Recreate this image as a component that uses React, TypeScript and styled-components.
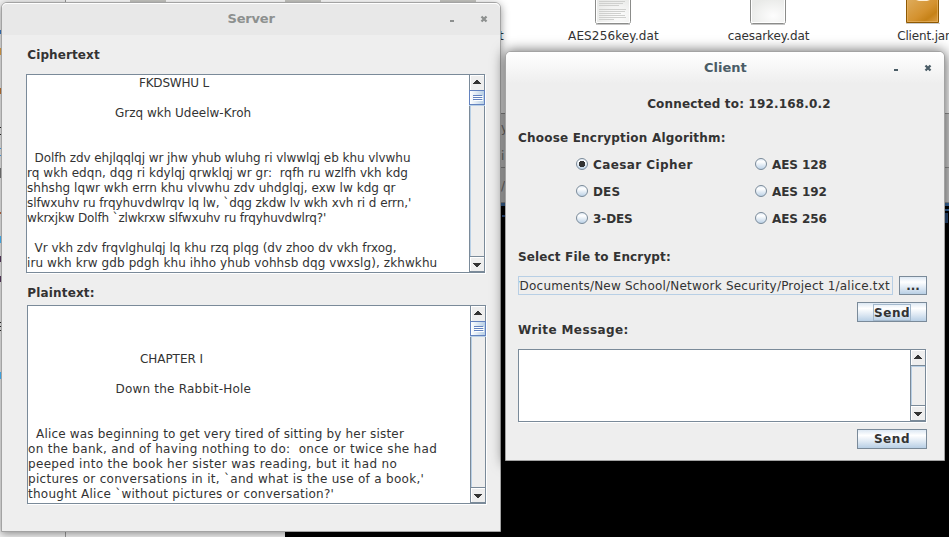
import React from "react";
import styled, { createGlobalStyle, css } from "styled-components";

const Global = createGlobalStyle`
  body { margin: 0; overflow: hidden; background: #fff; }
  * { box-sizing: border-box; }
`;

const steel = "#7a8a99";

const Desktop = styled.main`
  position: relative;
  width: 949px;
  height: 537px;
  overflow: hidden;
  background: #fff;
  color: #333;
  font: 12px/15px "DejaVu Sans", Verdana, sans-serif;
`;

/* ---------- backdrop ---------- */

const Backdrop = styled.div`
  display: grid;
  grid-template-columns: 65px 1px 219px 1fr;
  grid-template-rows: 203px 1fr;
  height: 537px;
`;
const Sidebar = styled.div`
  grid-row: 1 / 3;
  background: #f2f2f2;
`;
const SidebarEdge = styled.div`
  grid-row: 1 / 3;
  background: #999;
`;
const FilesLower = styled.div`
  grid-column: 3;
  grid-row: 2;
  background: #f4f4f4;
`;
const FilesUpper = styled.div`
  grid-column: 3 / 5;
  display: flex;
  flex-direction: column;
`;
const FilesBand = styled.div<{ $h: number; $tone: string }>`
  height: ${(p) => p.$h}px;
  background: ${(p) => p.$tone};
  border-bottom: 1px solid #999;
`;
const Terminal = styled.div`
  grid-column: 4;
  background: #000;
  border-top: 3px solid #3f70a8;
`;
const Sliver = styled.i<{ $x: number; $y: number; $w?: number; $h?: number; $c: string }>`
  position: absolute;
  left: ${(p) => p.$x}px;
  top: ${(p) => p.$y}px;
  width: ${(p) => p.$w ?? 1}px;
  height: ${(p) => p.$h ?? 3}px;
  background: ${(p) => p.$c};
`;
const Fragment = styled.span<{ $x: number; $y: number; $c: string }>`
  position: absolute;
  left: ${(p) => p.$x}px;
  top: ${(p) => p.$y}px;
  white-space: nowrap;
  color: ${(p) => p.$c};
`;
const DesktopFile = styled.figure<{ $x: number }>`
  position: absolute;
  left: ${(p) => p.$x}px;
  top: 0;
  width: 110px;
  margin: 0;
  display: flex;
  flex-direction: column;
  align-items: center;
  svg { display: block; }
`;
const FileName = styled.figcaption<{ $ls: number }>`
  margin-top: 2px;
  padding-left: 1px;
  letter-spacing: ${(p) => p.$ls}px;
  white-space: nowrap;
`;

const PageIcon = ({ lines }: { lines?: boolean }) => (
  <svg width="40" height="27" viewBox="0 0 40 27">
    <defs>
      <radialGradient id="paper" cx=".65" cy=".7" r=".7">
        <stop offset="0" stopColor="#fdfdfd" />
        <stop offset="1" stopColor="#e9eae8" />
      </radialGradient>
    </defs>
    <path d="M3 24.500h34" stroke="#000" strokeOpacity=".22" strokeWidth="1" />
    <path d="M2.500-2V21.500q0 2 2 2h31q2 0 2-2V-2" fill="url(#paper)" stroke="#8b8c8a" />
    <path d="M3.500 0V22.500h33V0" fill="none" stroke="#fff" />
    {lines && <path d="M6 1.500h26M6 3.500h24M6 5.500h20M6 9.500h27M6 11.500h26M6 13.500h22M6 15.500h26M6 17.500h27M6 19.500h15" stroke="#cfd0ce" />}
  </svg>
);
const JarIcon = () => (
  <svg width="40" height="27" viewBox="0 0 40 27">
    <defs>
      <linearGradient id="jar" x1="0" y1="0" x2="1" y2="1">
        <stop offset="0" stopColor="#dfae60" />
        <stop offset=".55" stopColor="#d4922f" />
        <stop offset=".75" stopColor="#c68218" />
        <stop offset="1" stopColor="#dda048" />
      </linearGradient>
    </defs>
    <path d="M3 23.500h34" stroke="#000" strokeOpacity=".2" strokeWidth="1" />
    <path d="M3.500-2V22.500h32V-2" fill="url(#jar)" stroke="#8f5902" />
    <path d="M4.500 0V21.500h30V0" fill="none" stroke="#e9b96e" strokeOpacity=".6" />
    <path d="M13 0h14l-3 1h-8z" fill="#fff0d8" />
  </svg>
);

/* ---------- windows ---------- */

const Frame = styled.section<{ $x: number; $y: number; $w: number; $h: number; $active?: boolean }>`
  position: absolute;
  left: ${(p) => p.$x}px;
  top: ${(p) => p.$y}px;
  width: ${(p) => p.$w}px;
  height: ${(p) => p.$h}px;
  background: #eee;
  border: 1px solid #a3a3a3;
  border-radius: 6px 6px 0 0;
  box-shadow: ${(p) => (p.$active ? "0 1px 13px 1px rgba(0,0,0,.62)" : "0 2px 8px rgba(0,0,0,.42)")};
`;
const TitleBar = styled.header<{ $active?: boolean }>`
  display: grid;
  grid-template-columns: 1fr 8px 24px 8px 12px;
  align-items: center;
  height: 32px;
  border-radius: 5px 5px 0 0;
  box-shadow: inset 0 1px 0 #fff;
  background: ${(p) => (p.$active ? "linear-gradient(#fff, #eee)" : "#e8e8e8")};
  color: ${(p) => (p.$active ? "#4a5c66" : "#8d908f")};
  svg { display: block; }
`;
const Title = styled.h1<{ $ls: number; $pad: number }>`
  margin: 0;
  padding-left: ${(p) => p.$pad}px;
  font-size: 13px;
  line-height: 16px;
  letter-spacing: ${(p) => p.$ls}px;
`;
const Minimize = () => (
  <svg width="8" height="8" viewBox="0 0 8 8">
    <path d="M2 6h4" stroke="currentColor" strokeWidth="2" />
  </svg>
);
const Close = () => (
  <svg width="8" height="8" viewBox="0 0 8 8">
    <path d="M1.500 1.500l5 5M6.500 1.500l-5 5" stroke="currentColor" strokeWidth="2.300" />
  </svg>
);

const Label = styled.h2<{ $ls?: number }>`
  margin: 0;
  height: 15px;
  font-size: 12px;
  line-height: 17px;
  font-weight: bold;
  letter-spacing: ${(p) => p.$ls ?? 0}px;
  white-space: nowrap;
`;

/* ---------- scroll pane ---------- */

const Pane = styled.div<{ $w: number; $h: number; $ml?: number }>`
  display: grid;
  grid-template-columns: 1fr 15px;
  width: ${(p) => p.$w}px;
  height: ${(p) => p.$h}px;
  margin-left: ${(p) => p.$ml ?? 0}px;
  border: 1px solid ${steel};
  box-shadow: 1px 1px 0 #fff;
  background: #fff;
`;
const TextArea = styled.div`
  min-width: 0;
  overflow: hidden;
`;
const Line = styled.div<{ $ls: number; $in: number }>`
  height: 15px;
  line-height: 17px;
  padding-left: ${(p) => p.$in}px;
  letter-spacing: ${(p) => p.$ls}px;
  white-space: pre;
`;
const Bar = styled.div`
  display: grid;
  grid-template-rows: 15px 1fr 16px;
  min-height: 0;
  border-left: 1px solid ${steel};
  background: #eee;
  svg { display: block; }
`;
const Arrow = styled.div<{ $down?: boolean }>`
  display: flex;
  justify-content: center;
  padding-top: ${(p) => (p.$down ? 6 : 5)}px;
  box-shadow: inset 1px 1px 0 #fff;
  ${(p) => p.$down && css`
    border-top: 1px solid ${steel};
    border-bottom: 1px solid ${steel};
  `}
`;
const Track = styled.div<{ $plain?: boolean }>`
  box-shadow: inset 1px 1px 0 #b8cfe5;
  ${(p) => p.$plain && css`border-top: 1px solid ${steel};`}
`;
const Thumb = styled.div`
  display: flex;
  flex-direction: column;
  gap: 1px;
  height: 15px;
  margin-left: -1px;
  margin-right: -1px;
  padding: 4px 0 0 3px;
  border: 1px solid #6382bf;
  background: linear-gradient(90deg, #fff, #b8cfe5);
  box-shadow: 0 1px 0 #b8cfe5;
`;
const Grip = styled.i`
  width: 9px;
  height: 1px;
  background: #6382bf;
  box-shadow: 1px 1px 0 #fff;
`;

const Triangle = ({ down }: { down?: boolean }) => (
  <svg width="8" height="4" viewBox="0 0 8 4" shapeRendering="crispEdges">
    <path fill="#333" d={down ? "M0 0h8v1h-1v1h-1v1h-1v1h-2v-1h-1v-1h-1v-1h-1z" : "M0 4h8v-1h-1v-1h-1v-1h-1v-1h-2v1h-1v1h-1v1h-1z"} />
  </svg>
);

type TextLine = [text: string, indent?: number, spacing?: number];

function ScrollPane({ w, h, ml, lines = [], thumb }: { w: number; h: number; ml?: number; lines?: TextLine[]; thumb?: boolean }) {
  return (
    <Pane $w={w} $h={h} $ml={ml}>
      <TextArea>
        {lines.map(([text, indent = 0, spacing = 0], i) => (
          <Line key={i} $in={indent} $ls={spacing}>{text}</Line>
        ))}
      </TextArea>
      <Bar>
        <Arrow><Triangle /></Arrow>
        <Track $plain={!thumb}>
          {thumb && <Thumb><Grip /><Grip /><Grip /></Thumb>}
        </Track>
        <Arrow $down><Triangle down /></Arrow>
      </Bar>
    </Pane>
  );
}

/* ---------- server ---------- */

const ServerBody = styled.div`
  display: flex;
  flex-direction: column;
  padding: 12px 0 0 24px;
`;
const Gap = styled.div<{ $h: number }>`
  height: ${(p) => p.$h}px;
  flex: none;
`;

const cipher: TextLine[] = [
  ["FKDSWHU L", 112, -0.2],
  [""],
  ["Grzq wkh Udeelw-Kroh", 88, -0.01],
  [""],
  [""],
  ["Dolfh zdv ehjlqqlqj wr jhw yhub wluhg ri vlwwlqj eb khu vlvwhu", 7.5, -0.06],
  ["rq wkh edqn, dqg ri kdylqj qrwklqj wr gr:  rqfh ru wzlfh vkh kdg", 0, 0.05],
  ["shhshg lqwr wkh errn khu vlvwhu zdv uhdglqj, exw lw kdg qr", 0, 0.05],
  ["slfwxuhv ru frqyhuvdwlrqv lq lw, `dqg zkdw lv wkh xvh ri d errn,'", 0, -0.07],
  ["wkrxjkw Dolfh `zlwkrxw slfwxuhv ru frqyhuvdwlrq?'", 0, -0.17],
  [""],
  ["Vr vkh zdv frqvlghulqj lq khu rzq plqg (dv zhoo dv vkh frxog,", 7.5, -0.01],
  ["iru wkh krw gdb pdgh khu ihho yhub vohhsb dqg vwxslg), zkhwkhu", 0, 0.1],
];
const plain: TextLine[] = [
  [""],
  [""],
  [""],
  ["CHAPTER I", 112, -0.06],
  [""],
  ["Down the Rabbit-Hole", 87.5, 0.21],
  [""],
  [""],
  ["Alice was beginning to get very tired of sitting by her sister", 8, 0.185],
  ["on the bank, and of having nothing to do:  once or twice she had", 0, 0.3],
  ["peeped into the book her sister was reading, but it had no", 0, 0.33],
  ["pictures or conversations in it, `and what is the use of a book,'", 0, 0.3],
  ["thought Alice `without pictures or conversation?'", 0, 0.25],
];

/* ---------- client ---------- */

const ClientBody = styled.div`
  display: flex;
  flex-direction: column;
  padding: 12px 18px 0 12px;
`;
const Status = styled(Label)`
  align-self: center;
  margin-left: 34px;
`;
const RadioGrid = styled.div`
  display: grid;
  grid-template-columns: 179px 1fr;
  grid-auto-rows: 27px;
  padding-left: 58px;
`;
const Option = styled.label`
  display: flex;
  align-items: flex-start;
  gap: 5px;
`;
const RadioDot = ({ on }: { on?: boolean }) => (
  <svg width="12" height="14" viewBox="0 0 12 14">
    <defs>
      <linearGradient id="knob" x1="0" y1="0" x2="0" y2="1">
        <stop offset="0" stopColor="#dde8f3" />
        <stop offset=".3" stopColor="#fff" />
        <stop offset="1" stopColor="#b8cfe5" />
      </linearGradient>
    </defs>
    <circle cx="6" cy="7" r="5.500" fill="url(#knob)" stroke={steel} />
    {on && <path d="M4 4h4v1h1v4h-1v1h-4v-1h-1v-4h1z" fill="#333" />}
  </svg>
);
const Row = styled.div<{ $end?: boolean }>`
  display: flex;
  justify-content: ${(p) => (p.$end ? "flex-end" : "space-between")};
  width: 409px;
`;
const PathField = styled.div`
  display: flex;
  justify-content: flex-end;
  width: 375px;
  height: 19px;
  padding-right: 2px;
  border: 1px solid #b8cfe5;
  overflow: hidden;
  line-height: 19px;
  white-space: nowrap;
  letter-spacing: 0.21px;
`;
const Button = styled.button<{ $w: number; $h: number; $ls: number }>`
  display: flex;
  align-items: center;
  justify-content: center;
  width: ${(p) => p.$w}px;
  height: ${(p) => p.$h}px;
  padding: 1px 0 0;
  border: 1px solid ${steel};
  background: linear-gradient(#dde8f3, #fff 30%, #dde8f3 65%, #b8cfe5);
  color: #333;
  font: bold 12px/15px "DejaVu Sans", Verdana, sans-serif;
  letter-spacing: ${(p) => p.$ls}px;
`;
const Focus = styled.span`
  width: 38px;
  height: 17px;
  margin-top: -1px;
  border: 1px solid #a3b8cc;
  line-height: 17px;
`;

const options: [string, number][] = [
  ["Caesar Cipher", 0.41],
  ["AES 128", -0.07],
  ["DES", 0.15],
  ["AES 192", -0.07],
  ["3-DES", -0.1],
  ["AES 256", -0.07],
];

export default function App() {
  return (
    <Desktop>
      <Global />
      <Backdrop>
        <Sidebar />
        <SidebarEdge />
        <FilesUpper>
          <FilesBand $h={114} $tone="#fff" />
          <FilesBand $h={54} $tone="#d9d9d9" />
          <FilesBand $h={35} $tone="#d2d2d2" />
        </FilesUpper>
        <FilesLower />
        <Terminal />
      </Backdrop>
      {[130, 285, 440].map((x) => (
        <Sliver key={x} $x={x} $y={0} $w={36} $h={2} $c="#c9c9c4" />
      ))}
      <Fragment $x={499} $y={29} $c="#333">t</Fragment>
      <Fragment $x={501} $y={121} $c="#777">y</Fragment>
      <Fragment $x={501} $y={149} $c="#777">i</Fragment>
      <Fragment $x={501} $y={179} $c="#777">/</Fragment>
      <DesktopFile $x={558}>
        <PageIcon lines />
        <FileName $ls={0.14}>AES256key.dat</FileName>
      </DesktopFile>
      <DesktopFile $x={713}>
        <PageIcon />
        <FileName $ls={-0.07}>caesarkey.dat</FileName>
      </DesktopFile>
      <DesktopFile $x={868}>
        <JarIcon />
        <FileName $ls={-0.15}>Client.jar</FileName>
      </DesktopFile>

      <Frame $x={1} $y={2} $w={500} $h={530}>
        <TitleBar>
          <Title $ls={-0.2} $pad={225.5}>Server</Title>
          <Minimize />
          <span />
          <Close />
        </TitleBar>
        <ServerBody>
          <Label $ls={0.1}>&#8202;Ciphertext</Label>
          <Gap $h={12} />
          <ScrollPane w={459} h={199} lines={cipher} thumb />
          <Gap $h={12} />
          <Label $ls={0.15}>&#8202;Plaintext:</Label>
          <Gap $h={5} />
          <ScrollPane w={459} h={199} ml={1} lines={plain} thumb />
        </ServerBody>
      </Frame>

      {([
        [30, 4, "#2f66a5"], [48, 7, "#c08a3e"], [88, 6, "#a3642c"], [127, 1, "#222"], [134, 1, "#222"],
        [148, 1, "#3f8fd0"], [155, 1, "#3f8fd0"], [168, 10, "#666"], [212, 2, "#a05a3a"], [236, 7, "#3da0dc"],
        [256, 6, "#4a3050"], [276, 6, "#4a3050"], [322, 1, "#222"], [326, 1, "#222"], [330, 1, "#222"], [372, 7, "#3da0dc"],
      ] as [number, number, string][]).map(([y, h, c]) => (
        <Sliver key={y} $x={0} $y={y} $h={h} $c={c} />
      ))}
      <Sliver $x={502} $y={215} $w={3} $h={2} $c="#2c4f86" />
      <Sliver $x={945} $y={209} $w={4} $h={2} $c="#3f70a8" />
      <Sliver $x={945} $y={213} $w={3} $h={10} $c="#2a4d7c" />

      <Frame $x={505} $y={51} $w={440} $h={410} $active>
        <TitleBar $active>
          <Title $ls={0} $pad={198}>Client</Title>
          <Minimize />
          <span />
          <Close />
        </TitleBar>
        <ClientBody>
          <Status $ls={0.17}>Connected to: 192.168.0.2</Status>
          <Gap $h={19} />
          <Label $ls={0.2}>Choose Encryption Algorithm:</Label>
          <Gap $h={12} />
          <RadioGrid>
            {options.map(([name, ls], i) => (
              <Option key={name}>
                <RadioDot on={i === 0} />
                <Label as="span" $ls={ls}>{name}</Label>
              </Option>
            ))}
          </RadioGrid>
          <Gap $h={11} />
          <Label $ls={0.14}>Select File to Encrypt:</Label>
          <Gap $h={12} />
          <Row>
            <PathField>/Documents/New School/Network Security/Project 1/alice.txt</PathField>
            <Button $w={28} $h={19} $ls={0}>...</Button>
          </Row>
          <Gap $h={7} />
          <Row $end>
            <Button $w={70} $h={20} $ls={0.56}><Focus>Send</Focus></Button>
          </Row>
          <Label $ls={0.4}>Write Message:</Label>
          <Gap $h={12} />
          <ScrollPane w={408} h={73} />
          <Gap $h={7} />
          <Row $end>
            <Button $w={70} $h={20} $ls={0.56}>Send</Button>
          </Row>
        </ClientBody>
      </Frame>
    </Desktop>
  );
}
